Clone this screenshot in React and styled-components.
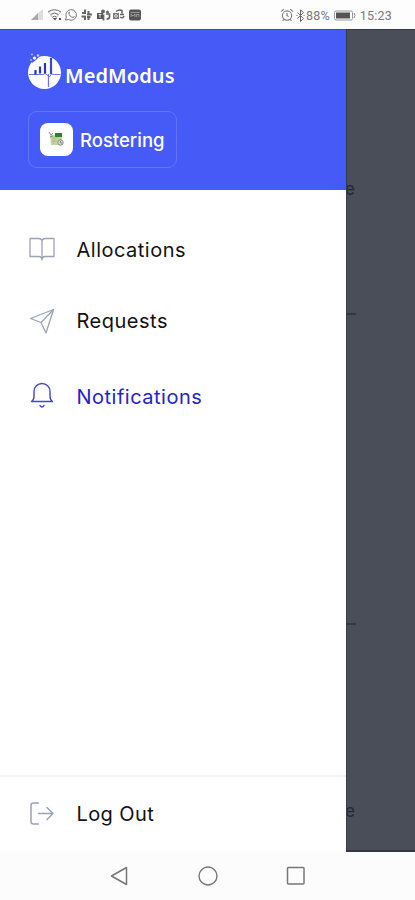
import styled, { createGlobalStyle } from "styled-components";

const GlobalStyle = createGlobalStyle`
  * {
    box-sizing: border-box;
  }

  body {
    margin: 0;
    background-color: #fdfdfd;
    font-family: Inter, "Liberation Sans", sans-serif;
  }

  svg {
    display: block;
    flex: none;
  }
`;

const StyledScreen = styled.div`
  width: 415px;
  height: 900px;
  display: flex;
  flex-direction: column;
  overflow: hidden;
`;

const StyledStatusBar = styled.header`
  height: 29px;
  flex: none;
  display: flex;
  align-items: center;
  justify-content: space-between;
  padding: 1px 23px 0 30px;
  color: #777;
  font-family: Roboto, sans-serif;
  font-size: 12.5px;

  .status {
    display: flex;
    align-items: center;
  }

  .percent {
    letter-spacing: 0.2px;
  }

  .clock {
    letter-spacing: 0.2px;
  }

  .battery {
    margin: 0 4px;
  }
`;

const StyledMain = styled.main`
  height: 823px;
  flex: none;
  display: flex;
`;

const StyledDrawer = styled.aside`
  width: 346px;
  flex: none;
  display: flex;
  flex-direction: column;
  background-color: #fff;
`;

const StyledBrand = styled.div`
  height: 161px;
  padding: 22px 27px 0;
  border-top: 1px solid #3549df;
  background-color: #465af7;
  color: #fff;

  .logo {
    display: flex;
    align-items: flex-start;
    font-family: "Noto Sans", sans-serif;
    font-size: 20px;
    font-weight: 600;
    line-height: 27px;
    letter-spacing: 0.1px;
  }

  .logo__name {
    margin: 10px 0 0 2px;
  }
`;

const StyledModule = styled.button`
  width: 149px;
  height: 57px;
  margin: 21px 0 0 1px;
  padding: 0 0 0 11px;
  display: flex;
  align-items: center;
  gap: 7px;
  border: 1px solid #6474f9;
  border-radius: 9px;
  background: none;
  color: #fff;
  font-family: inherit;
  font-size: 18.5px;
  font-weight: 500;
  white-space: nowrap;

  .tile {
    width: 33px;
    height: 33px;
    display: flex;
    align-items: center;
    justify-content: center;
    border-radius: 8px;
    background-color: #fff;
  }
`;

const StyledMenu = styled.nav`
  flex: 1;
  padding-top: 36px;
`;

const StyledItem = styled.a`
  height: 48px;
  margin-bottom: ${({ $gap }) => $gap || 0}px;
  padding-left: 28px;
  display: flex;
  align-items: center;
  gap: 20.5px;
  color: ${({ $active }) => ($active ? "#2424c8" : "#111")};
  font-size: 20px;
  letter-spacing: 0.5px;

  svg {
    margin-bottom: 2px;
    color: ${({ $active }) => ($active ? "#4444cf" : "#9ba3b5")};
  }
`;

const StyledFooter = styled.div`
  height: 77px;
  padding-top: 13px;
  border-top: 2px solid #f4f4f5;

  ${StyledItem} {
    letter-spacing: 0.4px;
  }

  svg {
    margin-bottom: 0;
  }
`;

const StyledBackdrop = styled.div`
  flex: 1;
  display: flex;
  flex-direction: column;
  overflow: hidden;
  border-top: 1px solid #353944;
  border-bottom: 2px solid #353744;
  border-left: 1px solid #343a4d;
  background-color: #4a4e59;
  color: #252832;
  font-size: 17px;
  line-height: 20px;
`;

const StyledRemnant = styled.span`
  height: 20px;
  margin-top: ${({ $top }) => $top}px;
  margin-left: -2px;
  flex: none;
`;

const StyledDash = styled.span`
  width: 9px;
  height: 2px;
  margin-top: ${({ $top }) => $top}px;
  flex: none;
  background-color: #343740;
`;

const StyledNavBar = styled.footer`
  height: 48px;
  flex: none;
  display: flex;
  justify-content: center;
  align-items: center;
  gap: 64px;
  background-color: #fcfcfc;
`;

const StatusIcons = () => (
  <svg width="113" height="14" viewBox="0 0 113 14" fill="none" stroke="#666">
    <path d="M1 12 8 5v7z" fill="#aaa" stroke="none" />
    <path d="M8 5l5-4v11H8z" fill="#ddd" stroke="none" />
    <path d="M18 4q6.500-4.500 13 0M20.500 6.500q4-3 8 0M22.500 9q2-1.500 4 0" />
    <path d="M18.500 4 24.500 12l6-8" stroke="#aaa" strokeWidth=".7" />
    <path d="M23 10h4l-2 2.500zM29 10h2v2h-2z" fill="#555" stroke="none" />
    <path d="M35.500 12l.8-3A5.300 5.300 0 1 1 38.500 11.500z" stroke="#777" />
    <path d="M39 4.500q-.5 4 4.500 5M38.500 5l1.500-1M43 9.500l1.500-1" stroke="#777" />
    <path d="M55 1.500v4M58.500 3v3M52 5h4M57 6.500h5M51.500 8.500h4M57 9h3.500M55 8v4M58.500 8v4" strokeWidth="2" />
    <path d="M67 5h6v6h-6z" fill="#555" stroke="none" />
    <circle cx="73" cy="3.500" r="2" fill="#666" stroke="none" />
    <circle cx="77.500" cy="4" r="1.500" fill="#666" stroke="none" />
    <path d="M73.500 6.500v6M76 6h3.500v3q0 2-3 2" strokeWidth="1.700" />
    <path d="M68.500 6.500h3M70 6.500v3.500" stroke="#fff" strokeWidth=".8" />
    <path d="M83 5h6v6h-6z" fill="#777" stroke="none" />
    <circle cx="86" cy="8" r="1.400" stroke="#fff" strokeWidth=".8" />
    <path d="M86 3.500q3-2.500 6-1v3M90 6.500h4M90 9q3 2 4-1" strokeWidth="1.500" />
    <rect x="99" y="1.500" width="12" height="11" rx="2" fill="#555" stroke="none" />
    <path d="M100.500 4.500h9M101 9V6l2 2 2-2v3M106.500 9V6.500h2.500V9" stroke="#aaa" strokeWidth=".8" />
  </svg>
);

const AlarmIcon = () => (
  <svg width="14" height="14" viewBox="0 0 13 13" fill="none" stroke="#777">
    <circle cx="6.500" cy="7" r="4.300" />
    <path d="M1 3.300 3.500 1M12 3.300 9.500 1M6.500 4.500V7L8 8M3.500 10.500l-1 1.500M9.500 10.500l1 1.500" />
  </svg>
);

const BluetoothIcon = () => (
  <svg width="12" height="13" viewBox="0 0 12 13" fill="none" stroke="#666">
    <path d="m3.500 3.500 6 6-3 3V1l3 2.500-6 6M2.500 6.500h1M9.500 6.500h1" />
  </svg>
);

const BatteryIcon = () => (
  <svg className="battery" width="22" height="11" viewBox="0 0 22 11" fill="none">
    <rect x=".5" y="1" width="18" height="9" rx="1.500" stroke="#999" />
    <path d="M2 2.500h14v6H2z" fill="#555" />
    <path d="M20 3q2 2.500 0 5" stroke="#888" />
  </svg>
);

const LogoMark = () => (
  <svg width="36" height="38" viewBox="0 0 36 38" fill="none">
    <circle cx="17.500" cy="20.500" r="16.500" fill="#fff" />
    <path d="M2 22.500h14l2-1 2.500 1.500 2 2 2-3 3 .5h6" stroke="#6577ee" strokeWidth="1" />
    <path d="M8.500 18v4.500M13 14.500v7M18 11v10.500" stroke="#2937b9" strokeWidth="2.200" />
    <path d="M24 6v16" stroke="#3447d9" strokeWidth="2.200" />
    <path d="M21.500 22v13" stroke="#6878ec" strokeWidth="1.300" />
    <path d="M3 8q5-5 11-5l-5 5-4 3z" fill="#465af7" />
    <circle cx="7.500" cy="6" r="1.600" fill="#fff" />
    <circle cx="11" cy="3.500" r="1.200" fill="#cbd2ff" />
    <circle cx="5" cy="2.500" r="1" fill="#aab4ff" />
    <circle cx="4" cy="8" r="1" fill="#aab4ff" />
  </svg>
);

const RosterIcon = () => (
  <svg width="17" height="17" viewBox="0 0 17 17" fill="none">
    <path d="M2 4h12v10H3z" fill="#c3d5a5" />
    <path d="M7 2h7v4H7z" fill="#347d32" />
    <path d="M1 1l2 3 2-2M2 6l3-1" stroke="#799774" />
    <path d="M4 7h7M4 10h5M6 7v6" stroke="#a6bd81" strokeWidth=".8" />
    <circle cx="12.500" cy="11.500" r="2.700" fill="#d8ddd3" stroke="#83907d" />
    <path d="M12.500 10v2H14" stroke="#66705f" strokeWidth=".7" />
  </svg>
);

const BookIcon = () => (
  <svg width="28" height="28" viewBox="0 0 28 28" fill="none" stroke="currentColor" strokeWidth="1.300" strokeLinejoin="round">
    <path d="M14 5.500q-1-2-3-2H2v18h9q2 0 3 2 1-2 3-2h9v-18h-9q-2 0-3 2z" />
    <path d="M14 5.500v20" />
  </svg>
);

const SendIcon = () => (
  <svg width="28" height="28" viewBox="0 0 28 28" fill="none" stroke="currentColor" strokeWidth="1.300" strokeLinejoin="round">
    <path d="M25.500 3.500 2.500 12.500l10.500 4L18 27z" />
    <path d="M25.500 3.500 13 16.500" />
  </svg>
);

const BellIcon = () => (
  <svg width="28" height="28" viewBox="0 0 28 28" fill="none" stroke="currentColor" strokeWidth="1.400" strokeLinecap="round" strokeLinejoin="round">
    <path d="M3.500 19.500q2.500-1.500 2.500-5V9.500a8 8 0 0 1 16 0v5q0 3.500 2.500 5z" />
    <path d="M12 23.500q2 3 4 0" />
  </svg>
);

const LogOutIcon = () => (
  <svg width="28" height="28" viewBox="0 0 28 28" fill="none" stroke="currentColor" strokeWidth="1.500" strokeLinecap="round" strokeLinejoin="round">
    <path d="M10.500 3H5.500Q3 3 3 5.500v16Q3 24 5.500 24h5" />
    <path d="M10.500 13.500H25M19 7.500l6 6-6 6" />
  </svg>
);

const BackIcon = () => (
  <svg width="24" height="24" viewBox="0 0 24 24" fill="none" stroke="#777" strokeWidth="1.500" strokeLinejoin="round">
    <path d="M18.500 3.500v17L3.500 12z" />
  </svg>
);

const HomeIcon = () => (
  <svg width="24" height="24" viewBox="0 0 24 24" fill="none" stroke="#777" strokeWidth="1.400">
    <circle cx="12" cy="12" r="9" />
  </svg>
);

const RecentIcon = () => (
  <svg width="24" height="24" viewBox="0 0 24 24" fill="none" stroke="#777" strokeWidth="1.500">
    <rect x="3.500" y="3.500" width="16.500" height="16.500" rx="1" />
  </svg>
);

const items = [
  { label: "Allocations", Icon: BookIcon, gap: 23 },
  { label: "Requests", Icon: SendIcon, gap: 28 },
  { label: "Notifications", Icon: BellIcon, active: true },
];

const StatusBar = () => (
  <StyledStatusBar>
    <StatusIcons />
    <div className="status">
      <AlarmIcon />
      <BluetoothIcon />
      <span className="percent">88%</span>
      <BatteryIcon />
      <span className="clock">15:23</span>
    </div>
  </StyledStatusBar>
);

const Drawer = () => (
  <StyledDrawer>
    <StyledBrand>
      <div className="logo">
        <LogoMark />
        <span className="logo__name">MedModus</span>
      </div>
      <StyledModule>
        <span className="tile">
          <RosterIcon />
        </span>
        Rostering
      </StyledModule>
    </StyledBrand>
    <StyledMenu>
      {items.map(({ label, Icon, gap, active }) => (
        <StyledItem key={label} $gap={gap} $active={active}>
          <Icon />
          {label}
        </StyledItem>
      ))}
    </StyledMenu>
    <StyledFooter>
      <StyledItem>
        <LogOutIcon />
        Log Out
      </StyledItem>
    </StyledFooter>
  </StyledDrawer>
);

const App = () => {
  return (
    <StyledScreen>
      <GlobalStyle />
      <StatusBar />
      <StyledMain>
        <Drawer />
        <StyledBackdrop>
          <StyledRemnant $top={149}>e</StyledRemnant>
          <StyledDash $top={114} />
          <StyledDash $top={308} />
          <StyledRemnant $top={176}>e</StyledRemnant>
        </StyledBackdrop>
      </StyledMain>
      <StyledNavBar>
        <BackIcon />
        <HomeIcon />
        <RecentIcon />
      </StyledNavBar>
    </StyledScreen>
  );
};

export default App;
